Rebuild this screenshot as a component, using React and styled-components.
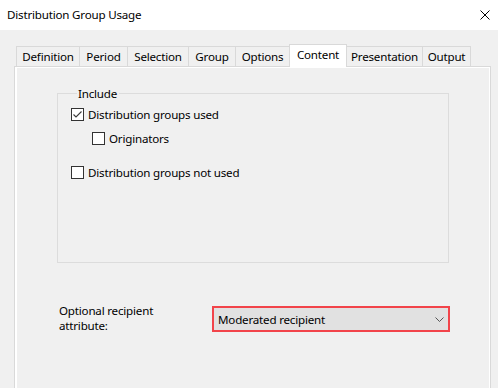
import React from "react";
import styled, { createGlobalStyle } from "styled-components";

const Global = createGlobalStyle`
  html, body { margin: 0; padding: 0; }
  body {
    background: #f0f0f0;
    font-family: "Noto Sans", "Open Sans", sans-serif;
    font-size: 11.6px;
    letter-spacing: -0.2px;
    color: #000;
    width: 498px;
    height: 388px;
    overflow: hidden;
  }
`;

const Window = styled.div`
  width: 498px;
  height: 388px;
  display: flex;
  flex-direction: column;
  background: #f0f0f0;
`;

const TitleBar = styled.div`
  height: 30px;
  flex: none;
  background: #fff;
  display: flex;
  align-items: center;
  justify-content: space-between;
  padding: 0 8px 0 7px;
  box-sizing: border-box;
`;

const Title = styled.span`
  line-height: 16px;
`;

const Close = styled.svg`
  width: 10px;
  height: 10px;
`;

const Body = styled.div`
  flex: 1;
  padding: 14px 7px 0 14px;
  display: flex;
  flex-direction: column;
  min-height: 0;
`;

const TabStrip = styled.div`
  display: flex;
  align-items: flex-end;
  height: 23px;
  padding-left: 2px;
  position: relative;
  z-index: 1;
  margin-bottom: -1px;
`;

const Tab = styled.div`
  box-sizing: border-box;
  width: ${(p) => p.$w}px;
  height: ${(p) => (p.$active ? 23 : 21)}px;
  border: 1px solid #d9d9d9;
  border-bottom: ${(p) => (p.$active ? "none" : "1px solid #d9d9d9")};
  margin-left: ${(p) => (p.$first ? 0 : -1)}px;
  background: ${(p) => (p.$active ? "#fff" : "#f0f0f0")};
  display: flex;
  align-items: ${(p) => (p.$active ? "flex-start" : "center")};
  padding-top: ${(p) => (p.$active ? 2 : 0)}px;
  justify-content: center;
  white-space: nowrap;
  line-height: 16px;
`;

const Panel = styled.div`
  flex: 1;
  border: 1px solid #d9d9d9;
  border-bottom: none;
  background: #fff;
  padding: 1px 1px 0 2px;
  display: flex;
  min-height: 0;
`;

const Page = styled.div`
  flex: 1;
  background: #f0f0f0;
  padding: 18px 0 0 40px;
  display: flex;
  flex-direction: column;
`;

const Group = styled.fieldset`
  margin: 0;
  width: 392px;
  height: 177px;
  box-sizing: border-box;
  border: 1px solid #dcdcdc;
  padding: 4px 0 0 13px;
  display: flex;
  flex-direction: column;
  align-items: flex-start;
`;

const Legend = styled.legend`
  padding: 0 2px 0 1px;
  margin-left: 6px;
  line-height: 15px;
`;

const CheckRow = styled.label`
  display: flex;
  align-items: center;
  gap: 4px;
  height: 15px;
  margin-left: ${(p) => p.$indent || 0}px;
  margin-top: ${(p) => p.$mt || 0}px;
`;

const Box = styled.span`
  width: 13px;
  height: 13px;
  box-sizing: border-box;
  border: 1px solid #333;
  background: #fff;
  display: flex;
  align-items: center;
  justify-content: center;
  flex: none;
`;

const AttrRow = styled.div`
  display: flex;
  align-items: flex-start;
  margin-top: 40px;
  padding-left: 2px;
`;

const AttrLabel = styled.div`
  width: 153px;
  line-height: 15px;
`;

const Select = styled.div`
  box-sizing: border-box;
  width: 238px;
  height: 26px;
  margin-top: 3px;
  border: 2px solid #f2444a;
  background: #e1e1e1;
  display: flex;
  align-items: center;
  justify-content: space-between;
  padding: 0 4px 0 4px;
`;

function Check({ checked }) {
  return (
    <Box>
      {checked && (
        <svg width="11" height="11" viewBox="0 0 11 11">
          <polyline points="1.5,5.5 4,8 9.5,2.5" fill="none" stroke="#3a3a3a" strokeWidth="1.1" />
        </svg>
      )}
    </Box>
  );
}

const tabs = [
  ["Definition", 64],
  ["Period", 49],
  ["Selection", 62],
  ["Group", 48],
  ["Options", 55],
  ["Content", 58],
  ["Presentation", 77],
  ["Output", 49],
];

export default function App() {
  return (
    <Window>
      <Global />
      <TitleBar>
        <Title>Distribution Group Usage</Title>
        <Close viewBox="0 0 10 10">
          <path d="M0.5 0.5 L9.5 9.5 M9.5 0.5 L0.5 9.5" stroke="#000" strokeWidth="1" />
        </Close>
      </TitleBar>
      <Body>
        <TabStrip>
          {tabs.map(([t, w], i) => (
            <Tab key={t} $w={w} $first={i === 0} $active={t === "Content"}>
              {t}
            </Tab>
          ))}
        </TabStrip>
        <Panel>
          <Page>
            <Group>
              <Legend>Include</Legend>
              <CheckRow $mt={2}>
                <Check checked />
                Distribution groups used
              </CheckRow>
              <CheckRow $indent={21} $mt={9}>
                <Check />
                Originators
              </CheckRow>
              <CheckRow $mt={19}>
                <Check />
                Distribution groups not used
              </CheckRow>
            </Group>
            <AttrRow>
              <AttrLabel>
                Optional recipient
                <br />
                attribute:
              </AttrLabel>
              <Select>
                <span>Moderated recipient</span>
                <svg width="9" height="5" viewBox="0 0 9 5">
                  <polyline points="0.5,0.5 4.5,4.5 8.5,0.5" fill="none" stroke="#555" strokeWidth="1" />
                </svg>
              </Select>
            </AttrRow>
          </Page>
        </Panel>
      </Body>
    </Window>
  );
}
